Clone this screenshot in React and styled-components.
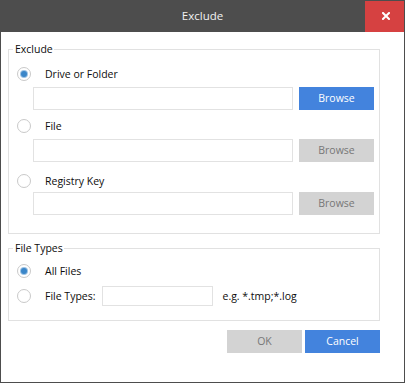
import React from "react";
import styled, { createGlobalStyle } from "styled-components";

const Global = createGlobalStyle`
  html, body { margin: 0; padding: 0; background: #ffffff; }
  body { font-family: "Open Sans", "Noto Sans", sans-serif; font-size: 10.5px; color: #0d0d0d; }
  * { box-sizing: border-box; }
`;

const Window = styled.div`
  width: 405px;
  height: 383px;
  background: #4d4d4d;
  padding: 0 1px 1px 1px;
  display: flex;
  flex-direction: column;
`;

const TitleBar = styled.div`
  height: 32px;
  flex: none;
  display: flex;
  align-items: stretch;
`;

const Title = styled.div`
  flex: 1;
  display: flex;
  align-items: center;
  justify-content: center;
  color: #f2f2f2;
  font-size: 11.5px;
  padding-left: 39px;
  padding-bottom: 1px;
`;

const CloseButton = styled.div`
  width: 39px;
  margin-top: 1px;
  background: #d64141;
  display: flex;
  align-items: center;
  justify-content: center;
  padding-bottom: 2px;
  padding-left: 2px;
`;

const Body = styled.div`
  flex: 1;
  background: #ffffff;
  padding: 0 24px 0 7px;
  display: flex;
  flex-direction: column;
`;

const Group = styled.div`
  position: relative;
  border: 1px solid #e1e1e1;
  margin-top: ${(p) => p.$top}px;
  padding: ${(p) => p.$pt}px 5px ${(p) => p.$pb}px 8px;
  display: flex;
  flex-direction: column;
`;

const Legend = styled.span`
  position: absolute;
  left: 4px;
  top: -8px;
  line-height: 14px;
  padding: 0 1px 0 2px;
  background: #ffffff;
`;

const RadioRow = styled.div`
  height: 20px;
  margin-top: ${(p) => p.$mt || 0}px;
  display: flex;
  align-items: center;
`;

const RadioCircle = styled.span`
  width: 14px;
  height: 14px;
  flex: none;
  border-radius: 50%;
  border: 1px solid #c9c9c9;
  background: #ffffff;
  display: flex;
  align-items: center;
  justify-content: center;
  &::after {
    content: "";
    display: ${(p) => (p.$checked ? "block" : "none")};
    width: 6px;
    height: 6px;
    border-radius: 50%;
    background: #3a86c9;
    box-shadow: 0 0 0 1px #9cc2e4;
  }
`;

const Label = styled.span`
  margin-left: ${(p) => p.$gap || 14}px;
  white-space: nowrap;
`;

const InputRow = styled.div`
  margin-top: ${(p) => p.$mt}px;
  padding-left: 16px;
  display: flex;
  gap: 6px;
  height: 23px;
`;

const TextBox = styled.div`
  width: ${(p) => p.$w}px;
  height: ${(p) => p.$h || 23}px;
  margin-left: ${(p) => p.$ml || 0}px;
  border: 1px solid #e2e2e2;
  background: #ffffff;
  flex: none;
`;

const Button = styled.div`
  width: 75px;
  height: 23px;
  flex: none;
  display: flex;
  align-items: center;
  justify-content: center;
  background: ${(p) => (p.$primary ? "#4383dd" : "#d3d3d3")};
  color: ${(p) => (p.$primary ? "#ffffff" : "#777777")};
  padding-bottom: 1px;
`;

const Hint = styled.span`
  margin-left: 9px;
  white-space: nowrap;
`;

const Footer = styled.div`
  margin-top: 9px;
  display: flex;
  justify-content: flex-end;
  gap: 3px;
`;

const Radio = ({ checked, label, gap, mt }) => (
  <RadioRow $mt={mt}>
    <RadioCircle $checked={checked} />
    <Label $gap={gap}>{label}</Label>
  </RadioRow>
);

export default function App() {
  return (
    <>
      <Global />
      <Window>
        <TitleBar>
          <Title>Exclude</Title>
          <CloseButton>
            <svg width="8" height="8" viewBox="0 0 8 8">
              <path d="M1 1 L7 7 M7 1 L1 7" stroke="#ffffff" strokeWidth="2" strokeLinecap="square" />
            </svg>
          </CloseButton>
        </TitleBar>
        <Body>
          <Group $top={17} $pt={14} $pb={18}>
            <Legend>Exclude</Legend>
            <Radio checked label="Drive or Folder" />
            <InputRow $mt={3}>
              <TextBox $w={260} />
              <Button $primary>Browse</Button>
            </InputRow>
            <Radio label="File" mt={6} />
            <InputRow $mt={3}>
              <TextBox $w={260} />
              <Button>Browse</Button>
            </InputRow>
            <Radio label="Registry Key" mt={9} />
            <InputRow $mt={1}>
              <TextBox $w={260} />
              <Button>Browse</Button>
            </InputRow>
          </Group>
          <Group $top={14} $pt={12} $pb={14}>
            <Legend>File Types</Legend>
            <Radio checked label="All Files" />
            <RadioRow $mt={5}>
              <RadioCircle />
              <Label>File Types:</Label>
              <TextBox $w={111} $h={20} $ml={7} />
              <Hint>e.g. *.tmp;*.log</Hint>
            </RadioRow>
          </Group>
          <Footer>
            <Button>OK</Button>
            <Button $primary>Cancel</Button>
          </Footer>
        </Body>
      </Window>
    </>
  );
}
